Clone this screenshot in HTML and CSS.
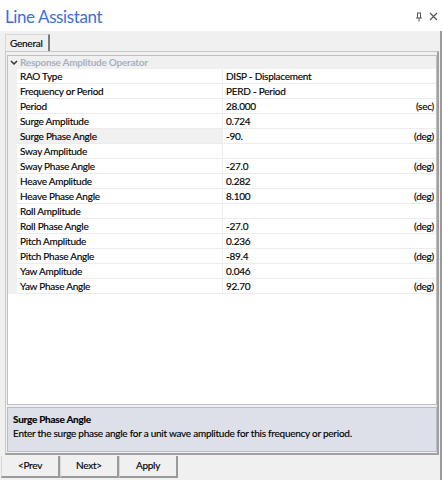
FILE: index.html
```html
<!DOCTYPE html>
<html>
<head>
<meta charset="utf-8">
<link rel="stylesheet" href="styles.css">
</head>
<body>
<div class="window">
  <div class="titlebar">
    <div class="title">Line Assistant</div>
    <div class="tools">
      <svg class="pin" width="8" height="10" viewBox="0 0 8 10"><path d="M2 1h4M2.5 1v5M5.5 1v5M1 6h6M4 6v3.5" stroke="#555" stroke-width="1" fill="none"/></svg>
      <svg class="close" width="9" height="9" viewBox="0 0 9 9"><path d="M1 1l7 7M8 1l-7 7" stroke="#555" stroke-width="1.2" fill="none"/></svg>
    </div>
  </div>
  <div class="body">
    <div class="tabs"><div class="tab">General</div></div>
    <div class="frame">
      <div class="grid">
        <div class="cat"><span class="chev"><svg width="8" height="6" viewBox="0 0 8 6"><path d="M1 1l3 3 3-3" stroke="#333" stroke-width="1.5" fill="none"/></svg></span>Response Amplitude Operator</div>
        <div class="rows">
          <div class="row"><div class="lbl">RAO Type</div><div class="val">DISP - Displacement</div></div>
          <div class="row"><div class="lbl">Frequency or Period</div><div class="val">PERD - Period</div></div>
          <div class="row"><div class="lbl">Period</div><div class="val">28.000<span class="unit">(sec)</span></div></div>
          <div class="row"><div class="lbl">Surge Amplitude</div><div class="val">0.724</div></div>
          <div class="row sel"><div class="lbl">Surge Phase Angle</div><div class="val">-90.<span class="unit">(deg)</span></div></div>
          <div class="row"><div class="lbl">Sway Amplitude</div><div class="val"></div></div>
          <div class="row"><div class="lbl">Sway Phase Angle</div><div class="val">-27.0<span class="unit">(deg)</span></div></div>
          <div class="row"><div class="lbl">Heave Amplitude</div><div class="val">0.282</div></div>
          <div class="row"><div class="lbl">Heave Phase Angle</div><div class="val">8.100<span class="unit">(deg)</span></div></div>
          <div class="row"><div class="lbl">Roll Amplitude</div><div class="val"></div></div>
          <div class="row"><div class="lbl">Roll Phase Angle</div><div class="val">-27.0<span class="unit">(deg)</span></div></div>
          <div class="row"><div class="lbl">Pitch Amplitude</div><div class="val">0.236</div></div>
          <div class="row"><div class="lbl">Pitch Phase Angle</div><div class="val">-89.4<span class="unit">(deg)</span></div></div>
          <div class="row"><div class="lbl">Yaw Amplitude</div><div class="val">0.046</div></div>
          <div class="row"><div class="lbl">Yaw Phase Angle</div><div class="val">92.70<span class="unit">(deg)</span></div></div>
        </div>
      </div>
      <div class="desc">
        <div class="desc-title">Surge Phase Angle</div>
        <div class="desc-text">Enter the surge phase angle for a unit wave amplitude for this frequency or period.</div>
      </div>
    </div>
    <div class="buttons">
      <div class="btn">&lt;Prev</div>
      <div class="btn">Next&gt;</div>
      <div class="btn">Apply</div>
    </div>
  </div>
</div>
</body>
</html>
```

FILE: styles.css
```css
html, body {
  margin: 0;
  padding: 0;
  background: #ffffff;
}
body {
  font-family: Lato, "Open Sans", sans-serif;
  font-size: 10px;
  letter-spacing: -0.25px;
  color: #000;
  -webkit-text-stroke: 0.15px #000;
}
.window {
  width: 443px;
  height: 480px;
  display: flex;
  flex-direction: column;
  box-sizing: border-box;
}
.titlebar {
  height: 31px;
  display: flex;
  align-items: center;
  justify-content: space-between;
  padding: 0 5px 0 5px;
  box-sizing: border-box;
}
.title {
  font-size: 17px;
  letter-spacing: -0.4px;
  color: #3b6fd6;
  -webkit-text-stroke: 0;
  line-height: 24px;
  margin-top: 2px;
}
.tools {
  display: flex;
  gap: 6px;
  align-items: center;
  margin-top: 2px;
}
.body {
  flex: 1;
  background: #f0f0f0;
  display: flex;
  flex-direction: column;
  border-right: 2px solid #9a9a9a;
  margin-right: 1px;
}
.tabs {
  height: 20px;
  padding: 3px 0 0 5px;
  box-sizing: border-box;
  display: flex;
}
.tab {
  border: 1px solid #d8d8d8;
  border-right: 2px solid #7a7a7a;
  border-bottom: none;
  padding: 0 5px 0 4px;
  line-height: 16px;
  background: #f0f0f0;
}
.frame {
  margin: 0 1px 0 5px;
  border: 1px solid #c8c8c8;
  border-right: 2px solid #a0a0a0;
  border-bottom: 2px solid #a0a0a0;
  display: flex;
  flex-direction: column;
  height: 404px;
  box-sizing: border-box;
  padding: 3px 0 1px 1px;
}
.grid {
  flex: 1;
  background: #ffffff;
  border: 1px solid #c0c0c0;
  display: flex;
  flex-direction: column;
}
.cat {
  background: #f0f0f0;
  height: 13px;
  line-height: 13px;
  color: #a8b0bf;
  -webkit-text-stroke: 0;
  font-weight: 700;
  display: flex;
  align-items: center;
}
.chev {
  width: 11px;
  display: flex;
  justify-content: center;
  margin-right: 1px;
}
.rows {
  border-left: 9px solid #f0f0f0;
  background: #f0f0f0;
}
.row {
  display: flex;
  height: 15px;
  box-sizing: border-box;
  border-bottom: 1px solid #ececec;
  line-height: 14px;
  background: #fff;
}
.lbl {
  width: 202px;
  padding-left: 3px;
  border-right: 1px solid #ececec;
  white-space: nowrap;
}
.sel .lbl {
  background: #f0f0f0;
}
.val {
  flex: 1;
  padding-left: 3px;
  padding-right: 2px;
  display: flex;
  justify-content: space-between;
  white-space: nowrap;
}
.desc {
  height: 45px;
  margin-top: 2px;
  background: #dde0e8;
  border: 1px solid #b8bcc6;
  padding: 4px 0 0 5px;
  box-sizing: border-box;
}
.desc-title {
  font-weight: 700;
  line-height: 14px;
}
.desc-text {
  line-height: 15px;
}
.buttons {
  display: flex;
  height: 22px;
  padding-top: 1px;
  padding-left: 1px;
}
.btn {
  width: 59px;
  text-align: center;
  line-height: 19px;
  border-left: 1px solid #d8d8d8;
  border-right: 2px solid #9a9a9a;
  border-bottom: 2px solid #9a9a9a;
  box-sizing: border-box;
}
```
